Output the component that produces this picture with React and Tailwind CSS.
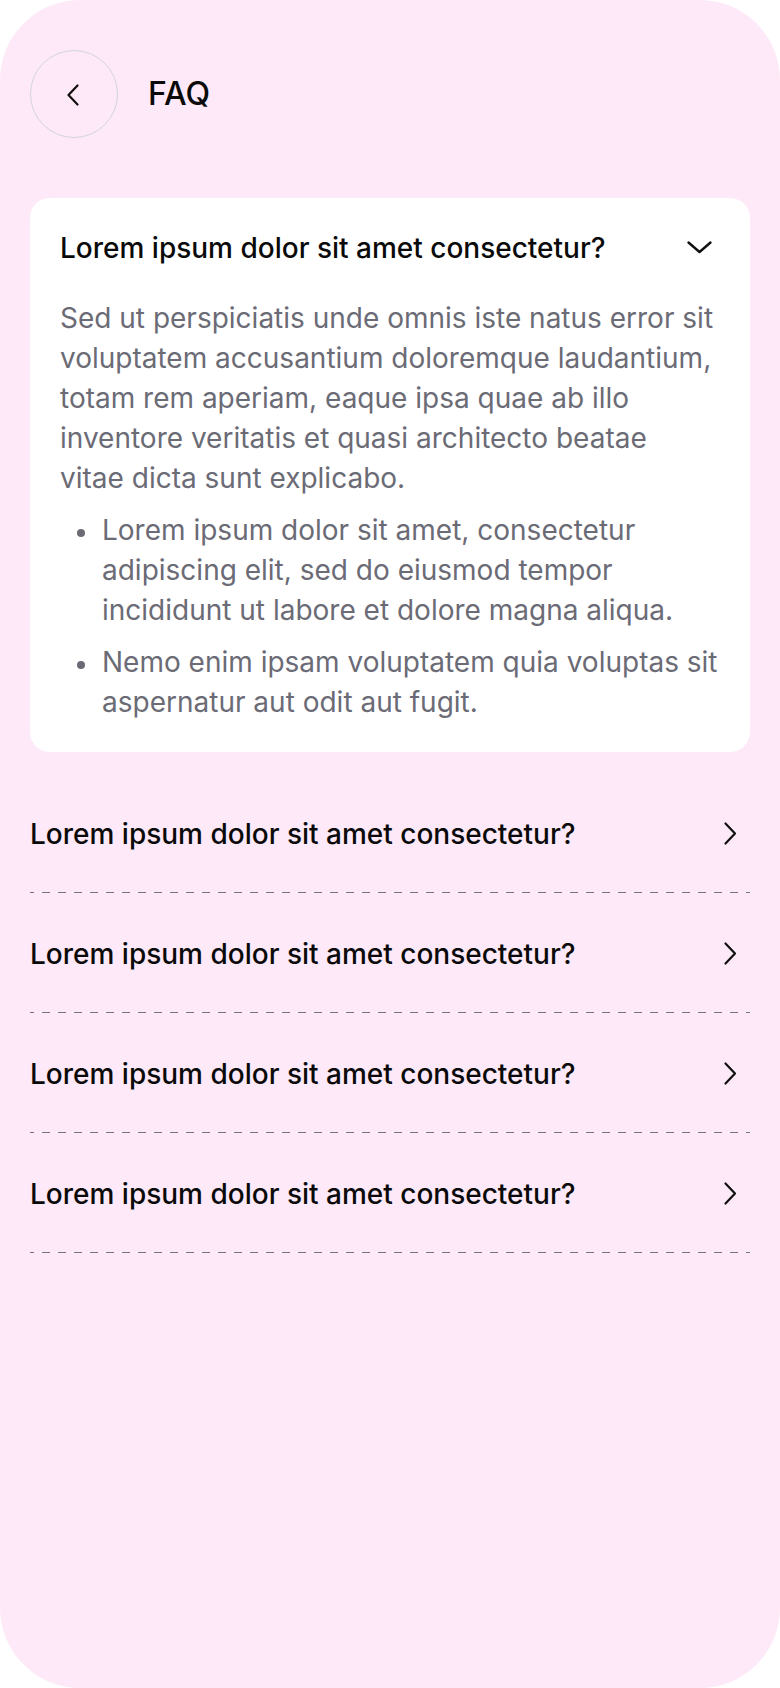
import React from 'react'

const questions = [
    'Lorem ipsum dolor sit amet consectetur?',
    'Lorem ipsum dolor sit amet consectetur?',
    'Lorem ipsum dolor sit amet consectetur?',
    'Lorem ipsum dolor sit amet consectetur?',
]

const bullets = [
    'Lorem ipsum dolor sit amet, consectetur adipiscing elit, sed do eiusmod tempor incididunt ut labore et dolore magna aliqua.',
    'Nemo enim ipsam voluptatem quia voluptas sit aspernatur aut odit aut fugit.',
]

const ChevronDown = () => (
    <svg width='40' height='40' viewBox='0 0 40 40' fill='none' className='shrink-0'>
        <path d='M8.5 14.5 L19.5 24 L30.5 14.5' stroke='#111' strokeWidth='2.4' strokeLinecap='round' strokeLinejoin='round' />
    </svg>
)

const ChevronRight = () => (
    <svg width='40' height='40' viewBox='0 0 40 40' fill='none' className='shrink-0'>
        <path d='M15.5 9.5 L25 19.5 L15.5 29.5' stroke='#111' strokeWidth='2.2' strokeLinecap='round' strokeLinejoin='round' />
    </svg>
)

const App = () => {
    return (
        <div className="w-[780px] h-[1688px] bg-white font-['Inter',sans-serif]">
            <div className='h-full rounded-[80px] bg-[#fde9f7] px-[30px]'>
                {/* Header */}
                <div className='flex items-center pt-[50px]'>
                    <button className='w-[88px] h-[88px] rounded-full border border-[#d4d4dc] flex items-center justify-center'>
                        <svg width='24' height='24' viewBox='0 0 24 24' fill='none'>
                            <path d='M15.5 3.5 L6.5 13 L15.5 22.5' stroke='#111' strokeWidth='2.2' strokeLinecap='round' strokeLinejoin='round' />
                        </svg>
                    </button>
                    <h1 className='ml-[30px] text-[32px] font-medium text-[#0a0a0a] leading-none'>FAQ</h1>
                </div>

                {/* Open item */}
                <div className='mt-[60px] rounded-[20px] bg-white px-[30px] pt-[30px] pb-[30px]'>
                    <div className='flex items-center justify-between h-[40px]'>
                        <span className='text-[28px] leading-[40px] font-medium text-[#0a0a0a]'>
                            Lorem ipsum dolor sit amet consectetur?
                        </span>
                        <ChevronDown />
                    </div>
                    <p className='mt-[30px] pr-[5px] text-[28px] leading-[40px] text-[#6b6b76]'>
                        Sed ut perspiciatis unde omnis iste natus error sit voluptatem accusantium doloremque laudantium, totam rem aperiam, eaque ipsa quae ab illo inventore veritatis et quasi architecto beatae vitae dicta sunt explicabo.
                    </p>
                    <ul className='mt-[12px] flex flex-col gap-[12px]'>
                        {bullets.map((b, i) => (
                            <li key={i} className='flex text-[28px] leading-[40px] text-[#6b6b76]'>
                                <span className='w-[42px] shrink-0 flex justify-start pl-[17px] pt-[19px]'>
                                    <span className='block w-[8px] h-[8px] rounded-full bg-[#6b6b76]' />
                                </span>
                                <span>{b}</span>
                            </li>
                        ))}
                    </ul>
                </div>

                {/* Collapsed items */}
                <div className='mt-[62px]'>
                    {questions.map((q, i) => (
                        <div key={i} className={i > 0 ? 'pt-[41px]' : ''}>
                            <div className='flex items-center justify-between h-[40px]'>
                                <span className='text-[28px] leading-[40px] font-medium text-[#0a0a0a]'>{q}</span>
                                <ChevronRight />
                            </div>
                            <div className='mt-[38px] h-px bg-[linear-gradient(to_right,#76767f_50%,transparent_50%)] bg-[length:16px_1px] bg-[position:-4px_0] bg-repeat-x' />
                        </div>
                    ))}
                </div>
            </div>
        </div>
    )
}

export default App
